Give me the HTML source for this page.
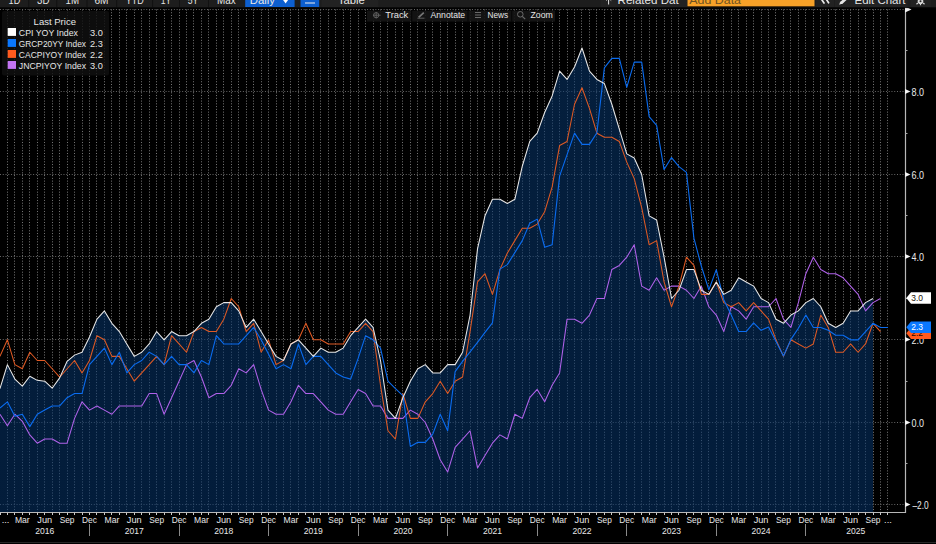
<!DOCTYPE html><html><head><meta charset="utf-8"><style>
html,body{margin:0;padding:0;background:#000;width:936px;height:544px;overflow:hidden;}
body{position:relative;font-family:"Liberation Sans",sans-serif;}
svg{position:absolute;left:0;top:0;}
text{font-family:"Liberation Sans",sans-serif;}
</style></head><body>
<svg width="936" height="544" viewBox="0 0 936 544">
<defs><linearGradient id="fg" x1="0" y1="0" x2="0" y2="1"><stop offset="0" stop-color="#08386f"/><stop offset="1" stop-color="#05346b"/></linearGradient></defs>
<path d="M7.50,9.5 V512.5 M14.50,9.5 V512.5 M22.50,9.5 V512.5 M29.50,9.5 V512.5 M37.50,9.5 V512.5 M44.50,9.5 V512.5 M52.50,9.5 V512.5 M59.50,9.5 V512.5 M67.50,9.5 V512.5 M74.50,9.5 V512.5 M82.50,9.5 V512.5 M89.50,9.5 V512.5 M96.50,9.5 V512.5 M104.50,9.5 V512.5 M111.50,9.5 V512.5 M119.50,9.5 V512.5 M126.50,9.5 V512.5 M134.50,9.5 V512.5 M141.50,9.5 V512.5 M149.50,9.5 V512.5 M156.50,9.5 V512.5 M164.50,9.5 V512.5 M171.50,9.5 V512.5 M179.50,9.5 V512.5 M186.50,9.5 V512.5 M193.50,9.5 V512.5 M201.50,9.5 V512.5 M208.50,9.5 V512.5 M216.50,9.5 V512.5 M223.50,9.5 V512.5 M231.50,9.5 V512.5 M238.50,9.5 V512.5 M246.50,9.5 V512.5 M253.50,9.5 V512.5 M261.50,9.5 V512.5 M268.50,9.5 V512.5 M276.50,9.5 V512.5 M283.50,9.5 V512.5 M290.50,9.5 V512.5 M298.50,9.5 V512.5 M305.50,9.5 V512.5 M313.50,9.5 V512.5 M320.50,9.5 V512.5 M328.50,9.5 V512.5 M335.50,9.5 V512.5 M343.50,9.5 V512.5 M350.50,9.5 V512.5 M358.50,9.5 V512.5 M365.50,9.5 V512.5 M373.50,9.5 V512.5 M380.50,9.5 V512.5 M387.50,9.5 V512.5 M395.50,9.5 V512.5 M402.50,9.5 V512.5 M410.50,9.5 V512.5 M417.50,9.5 V512.5 M425.50,9.5 V512.5 M432.50,9.5 V512.5 M440.50,9.5 V512.5 M447.50,9.5 V512.5 M455.50,9.5 V512.5 M462.50,9.5 V512.5 M470.50,9.5 V512.5 M477.50,9.5 V512.5 M484.50,9.5 V512.5 M492.50,9.5 V512.5 M499.50,9.5 V512.5 M507.50,9.5 V512.5 M514.50,9.5 V512.5 M522.50,9.5 V512.5 M529.50,9.5 V512.5 M537.50,9.5 V512.5 M544.50,9.5 V512.5 M552.50,9.5 V512.5 M559.50,9.5 V512.5 M567.50,9.5 V512.5 M574.50,9.5 V512.5 M581.50,9.5 V512.5 M589.50,9.5 V512.5 M596.50,9.5 V512.5 M604.50,9.5 V512.5 M611.50,9.5 V512.5 M619.50,9.5 V512.5 M626.50,9.5 V512.5 M634.50,9.5 V512.5 M641.50,9.5 V512.5 M649.50,9.5 V512.5 M656.50,9.5 V512.5 M664.50,9.5 V512.5 M671.50,9.5 V512.5 M678.50,9.5 V512.5 M686.50,9.5 V512.5 M693.50,9.5 V512.5 M701.50,9.5 V512.5 M708.50,9.5 V512.5 M716.50,9.5 V512.5 M723.50,9.5 V512.5 M731.50,9.5 V512.5 M738.50,9.5 V512.5 M746.50,9.5 V512.5 M753.50,9.5 V512.5 M761.50,9.5 V512.5 M768.50,9.5 V512.5 M775.50,9.5 V512.5 M783.50,9.5 V512.5 M790.50,9.5 V512.5 M798.50,9.5 V512.5 M805.50,9.5 V512.5 M813.50,9.5 V512.5 M820.50,9.5 V512.5 M828.50,9.5 V512.5 M835.50,9.5 V512.5 M843.50,9.5 V512.5 M850.50,9.5 V512.5 M858.50,9.5 V512.5 M865.50,9.5 V512.5 M873.50,9.5 V512.5 M880.50,9.5 V512.5 M887.50,9.5 V512.5" stroke="#787878" stroke-width="1" stroke-dasharray="1 1.76" fill="none"/>
<path d="M0,9.5 H905.5 M0,91.5 H905.5 M0,174.5 H905.5 M0,256.5 H905.5 M0,339.5 H905.5 M0,422.5 H905.5 M0,504.5 H905.5" stroke="#686868" stroke-width="1" stroke-dasharray="1 1.76" fill="none"/>
<path d="M-0.05,388.61 L7.41,364.63 L14.87,379.10 L22.34,386.13 L29.80,376.21 L37.26,380.34 L44.72,381.17 L52.18,388.19 L59.65,377.86 L67.11,361.33 L74.57,355.13 L82.03,352.23 L89.49,336.94 L96.96,319.17 L104.42,310.90 L111.88,323.30 L119.34,331.57 L126.80,343.97 L134.27,356.37 L141.73,352.23 L149.19,343.97 L156.65,331.57 L164.11,339.83 L171.58,331.57 L179.04,335.70 L186.50,335.70 L193.96,331.57 L201.42,323.30 L208.89,319.17 L216.35,306.77 L223.81,302.63 L231.27,302.63 L238.73,310.90 L246.20,327.43 L253.66,319.17 L261.12,331.57 L268.58,343.97 L276.04,356.37 L283.51,360.50 L290.97,343.97 L298.43,339.83 L305.89,348.10 L313.35,356.37 L320.82,348.10 L328.28,352.23 L335.74,352.23 L343.20,348.10 L350.66,335.70 L358.13,327.43 L365.59,319.17 L373.05,327.43 L380.51,360.50 L387.97,410.10 L395.44,418.37 L402.90,397.70 L410.36,381.17 L417.82,368.77 L425.28,364.63 L432.75,372.90 L440.21,372.90 L447.67,364.63 L455.13,364.63 L462.59,352.23 L470.06,315.03 L477.52,248.90 L484.98,215.84 L492.44,199.30 L499.90,199.30 L507.37,203.44 L514.83,199.30 L522.29,166.24 L529.75,141.44 L537.21,133.17 L544.68,112.50 L552.14,95.97 L559.60,71.17 L567.06,79.44 L574.52,67.04 L581.99,48.02 L589.45,71.17 L596.91,79.44 L604.37,83.57 L611.83,104.24 L619.30,129.04 L626.76,153.84 L634.22,157.97 L641.68,174.50 L649.14,215.84 L656.61,219.97 L664.07,257.17 L671.53,298.50 L678.99,290.23 L686.45,269.57 L693.92,269.57 L701.38,290.23 L708.84,294.37 L716.30,281.97 L723.76,294.37 L731.23,290.23 L738.69,277.83 L746.15,281.97 L753.61,286.10 L761.07,298.50 L768.54,302.63 L776.00,319.17 L783.46,323.30 L790.92,315.03 L798.38,310.90 L805.85,302.63 L813.31,298.50 L820.77,306.77 L828.23,323.30 L835.69,327.43 L843.16,323.30 L850.62,310.90 L858.08,310.90 L865.54,302.63 L873.00,298.50 L873.00,512.50 L-0.05,512.50 Z" fill="url(#fg)" fill-opacity="0.55"/>
<path d="M-0.05,414.23 L7.41,425.81 L14.87,414.23 L22.34,421.26 L29.80,434.90 L37.26,443.17 L44.72,439.03 L52.18,439.03 L59.65,443.17 L67.11,443.17 L74.57,418.37 L82.03,401.83 L89.49,410.10 L96.96,405.97 L104.42,410.10 L111.88,414.23 L119.34,405.97 L126.80,405.97 L134.27,405.97 L141.73,405.97 L149.19,393.57 L156.65,393.57 L164.11,414.23 L171.58,397.70 L179.04,381.17 L186.50,364.63 L193.96,360.50 L201.42,377.03 L208.89,397.70 L216.35,393.57 L223.81,393.57 L231.27,385.30 L238.73,368.77 L246.20,372.90 L253.66,364.63 L261.12,389.43 L268.58,410.10 L276.04,414.23 L283.51,414.23 L290.97,401.83 L298.43,385.30 L305.89,393.57 L313.35,393.57 L320.82,401.83 L328.28,410.10 L335.74,414.23 L343.20,414.23 L350.66,401.83 L358.13,389.43 L365.59,393.57 L373.05,405.97 L380.51,405.97 L387.97,418.37 L395.44,418.37 L402.90,418.37 L410.36,410.10 L417.82,414.23 L425.28,422.50 L432.75,439.03 L440.21,459.70 L447.67,472.10 L455.13,447.30 L462.59,439.03 L470.06,430.77 L477.52,467.97 L484.98,455.57 L492.44,443.17 L499.90,434.90 L507.37,439.03 L514.83,414.23 L522.29,418.37 L529.75,397.70 L537.21,389.43 L544.68,401.83 L552.14,385.30 L559.60,372.90 L567.06,319.17 L574.52,319.17 L581.99,323.30 L589.45,315.03 L596.91,298.50 L604.37,298.50 L611.83,269.57 L619.30,265.43 L626.76,257.17 L634.22,244.77 L641.68,286.10 L649.14,290.23 L656.61,277.83 L664.07,290.23 L671.53,286.10 L678.99,286.10 L686.45,290.23 L693.92,298.50 L701.38,286.10 L708.84,306.77 L716.30,315.03 L723.76,331.57 L731.23,306.77 L738.69,310.90 L746.15,319.17 L753.61,306.77 L761.07,306.77 L768.54,306.77 L776.00,298.50 L783.46,319.17 L790.92,327.43 L798.38,302.63 L805.85,273.70 L813.31,257.17 L820.77,269.57 L828.23,273.70 L835.69,273.70 L843.16,277.83 L850.62,286.10 L858.08,294.37 L865.54,310.90 L873.00,302.63 L880.47,298.50" stroke="#b062ea" stroke-width="1.05" fill="none" stroke-linejoin="round"/>
<path d="M-0.05,356.37 L7.41,339.83 L14.87,364.63 L22.34,368.77 L29.80,352.23 L37.26,360.50 L44.72,360.50 L52.18,368.77 L59.65,377.03 L67.11,368.77 L74.57,360.50 L82.03,372.90 L89.49,360.50 L96.96,335.70 L104.42,339.83 L111.88,356.37 L119.34,356.37 L126.80,368.77 L134.27,381.17 L141.73,372.90 L149.19,364.63 L156.65,356.37 L164.11,364.63 L171.58,335.70 L179.04,343.97 L186.50,352.23 L193.96,331.57 L201.42,327.43 L208.89,331.57 L216.35,331.57 L223.81,319.17 L231.27,298.50 L238.73,306.77 L246.20,331.57 L253.66,323.30 L261.12,352.23 L268.58,339.83 L276.04,364.63 L283.51,360.50 L290.97,343.97 L298.43,339.83 L305.89,323.30 L313.35,339.83 L320.82,339.83 L328.28,343.97 L335.74,343.97 L343.20,343.97 L350.66,331.57 L358.13,331.57 L365.59,323.30 L373.05,331.57 L380.51,385.30 L387.97,430.77 L395.44,439.03 L402.90,393.57 L410.36,418.37 L417.82,418.37 L425.28,401.83 L432.75,393.57 L440.21,381.17 L447.67,393.57 L455.13,381.17 L462.59,377.03 L470.06,331.57 L477.52,281.97 L484.98,273.70 L492.44,294.37 L499.90,269.57 L507.37,253.03 L514.83,240.63 L522.29,228.23 L529.75,228.23 L537.21,224.10 L544.68,211.70 L552.14,186.90 L559.60,145.57 L567.06,141.44 L574.52,104.24 L581.99,87.70 L589.45,108.37 L596.91,133.17 L604.37,137.30 L611.83,137.30 L619.30,141.44 L626.76,162.10 L634.22,178.64 L641.68,207.57 L649.14,244.77 L656.61,240.63 L664.07,281.97 L671.53,306.77 L678.99,286.10 L686.45,257.17 L693.92,265.43 L701.38,294.37 L708.84,294.37 L716.30,281.97 L723.76,302.63 L731.23,306.77 L738.69,302.63 L746.15,310.90 L753.61,302.63 L761.07,310.90 L768.54,319.17 L776.00,339.83 L783.46,356.37 L790.92,339.83 L798.38,343.97 L805.85,348.10 L813.31,343.97 L820.77,315.03 L828.23,327.43 L835.69,352.23 L843.16,352.23 L850.62,343.97 L858.08,352.23 L865.54,343.97 L873.00,323.30 L880.47,331.57" stroke="#e05a24" stroke-width="1.05" fill="none" stroke-linejoin="round"/>
<path d="M-0.05,408.03 L7.41,401.83 L14.87,416.30 L22.34,414.23 L29.80,426.63 L37.26,414.23 L44.72,410.10 L52.18,405.97 L59.65,405.97 L67.11,397.70 L74.57,393.57 L82.03,393.57 L89.49,364.63 L96.96,356.37 L104.42,348.10 L111.88,364.63 L119.34,352.23 L126.80,372.90 L134.27,364.63 L141.73,360.50 L149.19,352.23 L156.65,356.37 L164.11,364.63 L171.58,356.37 L179.04,364.63 L186.50,364.63 L193.96,372.90 L201.42,360.50 L208.89,364.63 L216.35,335.70 L223.81,343.97 L231.27,343.97 L238.73,343.97 L246.20,335.70 L253.66,327.43 L261.12,339.83 L268.58,354.30 L276.04,368.77 L283.51,364.63 L290.97,368.77 L298.43,343.97 L305.89,364.63 L313.35,356.37 L320.82,356.37 L328.28,364.63 L335.74,372.90 L343.20,377.03 L350.66,379.10 L358.13,358.43 L365.59,335.70 L373.05,339.83 L380.51,348.10 L387.97,381.17 L395.44,388.61 L402.90,395.63 L410.36,446.47 L417.82,442.34 L425.28,442.34 L432.75,434.07 L440.21,414.23 L447.67,430.77 L455.13,371.66 L462.59,361.33 L470.06,351.82 L477.52,342.31 L484.98,332.39 L492.44,322.89 L499.90,269.15 L507.37,264.61 L514.83,252.62 L522.29,240.63 L529.75,223.27 L537.21,219.14 L544.68,247.25 L552.14,244.77 L559.60,176.16 L567.06,154.66 L574.52,133.17 L581.99,144.33 L589.45,144.33 L596.91,132.76 L604.37,67.86 L611.83,58.36 L619.30,58.36 L626.76,87.29 L634.22,62.08 L641.68,62.08 L649.14,116.64 L656.61,125.32 L664.07,169.54 L671.53,157.56 L678.99,166.65 L686.45,172.44 L693.92,238.15 L701.38,266.26 L708.84,289.82 L716.30,269.57 L723.76,299.74 L731.23,315.03 L738.69,331.57 L746.15,331.57 L753.61,322.89 L761.07,330.33 L768.54,327.02 L776.00,341.49 L783.46,355.95 L790.92,339.42 L798.38,328.26 L805.85,315.03 L813.31,327.43 L820.77,327.43 L828.23,330.33 L835.69,335.29 L843.16,335.29 L850.62,339.83 L858.08,339.83 L865.54,331.57 L873.00,323.30 L880.47,327.43 L887.93,327.43" stroke="#0a6cf0" stroke-width="1.1" fill="none" stroke-linejoin="round"/>
<path d="M-0.05,388.61 L7.41,364.63 L14.87,379.10 L22.34,386.13 L29.80,376.21 L37.26,380.34 L44.72,381.17 L52.18,388.19 L59.65,377.86 L67.11,361.33 L74.57,355.13 L82.03,352.23 L89.49,336.94 L96.96,319.17 L104.42,310.90 L111.88,323.30 L119.34,331.57 L126.80,343.97 L134.27,356.37 L141.73,352.23 L149.19,343.97 L156.65,331.57 L164.11,339.83 L171.58,331.57 L179.04,335.70 L186.50,335.70 L193.96,331.57 L201.42,323.30 L208.89,319.17 L216.35,306.77 L223.81,302.63 L231.27,302.63 L238.73,310.90 L246.20,327.43 L253.66,319.17 L261.12,331.57 L268.58,343.97 L276.04,356.37 L283.51,360.50 L290.97,343.97 L298.43,339.83 L305.89,348.10 L313.35,356.37 L320.82,348.10 L328.28,352.23 L335.74,352.23 L343.20,348.10 L350.66,335.70 L358.13,327.43 L365.59,319.17 L373.05,327.43 L380.51,360.50 L387.97,410.10 L395.44,418.37 L402.90,397.70 L410.36,381.17 L417.82,368.77 L425.28,364.63 L432.75,372.90 L440.21,372.90 L447.67,364.63 L455.13,364.63 L462.59,352.23 L470.06,315.03 L477.52,248.90 L484.98,215.84 L492.44,199.30 L499.90,199.30 L507.37,203.44 L514.83,199.30 L522.29,166.24 L529.75,141.44 L537.21,133.17 L544.68,112.50 L552.14,95.97 L559.60,71.17 L567.06,79.44 L574.52,67.04 L581.99,48.02 L589.45,71.17 L596.91,79.44 L604.37,83.57 L611.83,104.24 L619.30,129.04 L626.76,153.84 L634.22,157.97 L641.68,174.50 L649.14,215.84 L656.61,219.97 L664.07,257.17 L671.53,298.50 L678.99,290.23 L686.45,269.57 L693.92,269.57 L701.38,290.23 L708.84,294.37 L716.30,281.97 L723.76,294.37 L731.23,290.23 L738.69,277.83 L746.15,281.97 L753.61,286.10 L761.07,298.50 L768.54,302.63 L776.00,319.17 L783.46,323.30 L790.92,315.03 L798.38,310.90 L805.85,302.63 L813.31,298.50 L820.77,306.77 L828.23,323.30 L835.69,327.43 L843.16,323.30 L850.62,310.90 L858.08,310.90 L865.54,302.63 L873.00,298.50" stroke="#e8e8e8" stroke-width="1.05" fill="none" stroke-linejoin="round"/>
<path d="M0,512.5 H905.5 V9.5" stroke="#b8b8b8" stroke-width="1.2" fill="none"/>
<path d="M0.5,512.5 V515.0 M7.50,512.5 V515.0 M14.50,512.5 V515.0 M22.50,512.5 V515.0 M29.50,512.5 V515.0 M37.50,512.5 V515.0 M44.50,512.5 V515.0 M52.50,512.5 V515.0 M59.50,512.5 V515.0 M67.50,512.5 V515.0 M74.50,512.5 V515.0 M82.50,512.5 V515.0 M89.50,512.5 V515.0 M96.50,512.5 V515.0 M104.50,512.5 V515.0 M111.50,512.5 V515.0 M119.50,512.5 V515.0 M126.50,512.5 V515.0 M134.50,512.5 V515.0 M141.50,512.5 V515.0 M149.50,512.5 V515.0 M156.50,512.5 V515.0 M164.50,512.5 V515.0 M171.50,512.5 V515.0 M179.50,512.5 V515.0 M186.50,512.5 V515.0 M193.50,512.5 V515.0 M201.50,512.5 V515.0 M208.50,512.5 V515.0 M216.50,512.5 V515.0 M223.50,512.5 V515.0 M231.50,512.5 V515.0 M238.50,512.5 V515.0 M246.50,512.5 V515.0 M253.50,512.5 V515.0 M261.50,512.5 V515.0 M268.50,512.5 V515.0 M276.50,512.5 V515.0 M283.50,512.5 V515.0 M290.50,512.5 V515.0 M298.50,512.5 V515.0 M305.50,512.5 V515.0 M313.50,512.5 V515.0 M320.50,512.5 V515.0 M328.50,512.5 V515.0 M335.50,512.5 V515.0 M343.50,512.5 V515.0 M350.50,512.5 V515.0 M358.50,512.5 V515.0 M365.50,512.5 V515.0 M373.50,512.5 V515.0 M380.50,512.5 V515.0 M387.50,512.5 V515.0 M395.50,512.5 V515.0 M402.50,512.5 V515.0 M410.50,512.5 V515.0 M417.50,512.5 V515.0 M425.50,512.5 V515.0 M432.50,512.5 V515.0 M440.50,512.5 V515.0 M447.50,512.5 V515.0 M455.50,512.5 V515.0 M462.50,512.5 V515.0 M470.50,512.5 V515.0 M477.50,512.5 V515.0 M484.50,512.5 V515.0 M492.50,512.5 V515.0 M499.50,512.5 V515.0 M507.50,512.5 V515.0 M514.50,512.5 V515.0 M522.50,512.5 V515.0 M529.50,512.5 V515.0 M537.50,512.5 V515.0 M544.50,512.5 V515.0 M552.50,512.5 V515.0 M559.50,512.5 V515.0 M567.50,512.5 V515.0 M574.50,512.5 V515.0 M581.50,512.5 V515.0 M589.50,512.5 V515.0 M596.50,512.5 V515.0 M604.50,512.5 V515.0 M611.50,512.5 V515.0 M619.50,512.5 V515.0 M626.50,512.5 V515.0 M634.50,512.5 V515.0 M641.50,512.5 V515.0 M649.50,512.5 V515.0 M656.50,512.5 V515.0 M664.50,512.5 V515.0 M671.50,512.5 V515.0 M678.50,512.5 V515.0 M686.50,512.5 V515.0 M693.50,512.5 V515.0 M701.50,512.5 V515.0 M708.50,512.5 V515.0 M716.50,512.5 V515.0 M723.50,512.5 V515.0 M731.50,512.5 V515.0 M738.50,512.5 V515.0 M746.50,512.5 V515.0 M753.50,512.5 V515.0 M761.50,512.5 V515.0 M768.50,512.5 V515.0 M775.50,512.5 V515.0 M783.50,512.5 V515.0 M790.50,512.5 V515.0 M798.50,512.5 V515.0 M805.50,512.5 V515.0 M813.50,512.5 V515.0 M820.50,512.5 V515.0 M828.50,512.5 V515.0 M835.50,512.5 V515.0 M843.50,512.5 V515.0 M850.50,512.5 V515.0 M858.50,512.5 V515.0 M865.50,512.5 V515.0 M873.50,512.5 V515.0 M880.50,512.5 V515.0 M887.50,512.5 V515.0" stroke="#c8c8c8" stroke-width="1" fill="none"/>
<path d="M905.0,88.9 L910.5,91.5 L905.0,94.1 Z" fill="#f4f4f4"/>
<text x="911.6" y="95.7" font-size="10" fill="#eaeaea" textLength="12.5" lengthAdjust="spacingAndGlyphs">8.0</text>
<path d="M905.0,171.9 L910.5,174.5 L905.0,177.1 Z" fill="#f4f4f4"/>
<text x="911.6" y="178.7" font-size="10" fill="#eaeaea" textLength="12.5" lengthAdjust="spacingAndGlyphs">6.0</text>
<path d="M905.0,253.9 L910.5,256.5 L905.0,259.1 Z" fill="#f4f4f4"/>
<text x="911.6" y="260.7" font-size="10" fill="#eaeaea" textLength="12.5" lengthAdjust="spacingAndGlyphs">4.0</text>
<path d="M905.0,336.9 L910.5,339.5 L905.0,342.1 Z" fill="#f4f4f4"/>
<text x="911.6" y="343.7" font-size="10" fill="#eaeaea" textLength="12.5" lengthAdjust="spacingAndGlyphs">2.0</text>
<path d="M905.0,419.9 L910.5,422.5 L905.0,425.1 Z" fill="#f4f4f4"/>
<text x="911.6" y="426.7" font-size="10" fill="#eaeaea" textLength="12.5" lengthAdjust="spacingAndGlyphs">0.0</text>
<path d="M905.0,501.9 L910.5,504.5 L905.0,507.1 Z" fill="#f4f4f4"/>
<text x="912.4" y="508.7" font-size="10" fill="#eaeaea" textLength="16.3" lengthAdjust="spacingAndGlyphs">–2.0</text>
<path d="M905.5,50.5 H907.5" stroke="#aaa" stroke-width="1"/>
<path d="M905.5,133.5 H907.5" stroke="#aaa" stroke-width="1"/>
<path d="M905.5,215.5 H907.5" stroke="#aaa" stroke-width="1"/>
<path d="M905.5,298.5 H907.5" stroke="#aaa" stroke-width="1"/>
<path d="M905.5,381.5 H907.5" stroke="#aaa" stroke-width="1"/>
<path d="M905.5,463.5 H907.5" stroke="#aaa" stroke-width="1"/>
<path d="M905.0,6.5 L911.5,9.5 L905.0,12.5 Z" fill="#f0f0f0"/>
<text x="22.34" y="522.9" font-size="9.3" fill="#e8e8e8" text-anchor="middle" textLength="14.8" lengthAdjust="spacingAndGlyphs">Mar</text>
<text x="44.72" y="522.9" font-size="9.3" fill="#e8e8e8" text-anchor="middle" textLength="14.8" lengthAdjust="spacingAndGlyphs">Jun</text>
<text x="67.11" y="522.9" font-size="9.3" fill="#e8e8e8" text-anchor="middle" textLength="14.8" lengthAdjust="spacingAndGlyphs">Sep</text>
<text x="89.49" y="522.9" font-size="9.3" fill="#e8e8e8" text-anchor="middle" textLength="14.8" lengthAdjust="spacingAndGlyphs">Dec</text>
<text x="111.88" y="522.9" font-size="9.3" fill="#e8e8e8" text-anchor="middle" textLength="14.8" lengthAdjust="spacingAndGlyphs">Mar</text>
<text x="134.27" y="522.9" font-size="9.3" fill="#e8e8e8" text-anchor="middle" textLength="14.8" lengthAdjust="spacingAndGlyphs">Jun</text>
<text x="156.65" y="522.9" font-size="9.3" fill="#e8e8e8" text-anchor="middle" textLength="14.8" lengthAdjust="spacingAndGlyphs">Sep</text>
<text x="179.04" y="522.9" font-size="9.3" fill="#e8e8e8" text-anchor="middle" textLength="14.8" lengthAdjust="spacingAndGlyphs">Dec</text>
<text x="201.42" y="522.9" font-size="9.3" fill="#e8e8e8" text-anchor="middle" textLength="14.8" lengthAdjust="spacingAndGlyphs">Mar</text>
<text x="223.81" y="522.9" font-size="9.3" fill="#e8e8e8" text-anchor="middle" textLength="14.8" lengthAdjust="spacingAndGlyphs">Jun</text>
<text x="246.20" y="522.9" font-size="9.3" fill="#e8e8e8" text-anchor="middle" textLength="14.8" lengthAdjust="spacingAndGlyphs">Sep</text>
<text x="268.58" y="522.9" font-size="9.3" fill="#e8e8e8" text-anchor="middle" textLength="14.8" lengthAdjust="spacingAndGlyphs">Dec</text>
<text x="290.97" y="522.9" font-size="9.3" fill="#e8e8e8" text-anchor="middle" textLength="14.8" lengthAdjust="spacingAndGlyphs">Mar</text>
<text x="313.35" y="522.9" font-size="9.3" fill="#e8e8e8" text-anchor="middle" textLength="14.8" lengthAdjust="spacingAndGlyphs">Jun</text>
<text x="335.74" y="522.9" font-size="9.3" fill="#e8e8e8" text-anchor="middle" textLength="14.8" lengthAdjust="spacingAndGlyphs">Sep</text>
<text x="358.13" y="522.9" font-size="9.3" fill="#e8e8e8" text-anchor="middle" textLength="14.8" lengthAdjust="spacingAndGlyphs">Dec</text>
<text x="380.51" y="522.9" font-size="9.3" fill="#e8e8e8" text-anchor="middle" textLength="14.8" lengthAdjust="spacingAndGlyphs">Mar</text>
<text x="402.90" y="522.9" font-size="9.3" fill="#e8e8e8" text-anchor="middle" textLength="14.8" lengthAdjust="spacingAndGlyphs">Jun</text>
<text x="425.28" y="522.9" font-size="9.3" fill="#e8e8e8" text-anchor="middle" textLength="14.8" lengthAdjust="spacingAndGlyphs">Sep</text>
<text x="447.67" y="522.9" font-size="9.3" fill="#e8e8e8" text-anchor="middle" textLength="14.8" lengthAdjust="spacingAndGlyphs">Dec</text>
<text x="470.06" y="522.9" font-size="9.3" fill="#e8e8e8" text-anchor="middle" textLength="14.8" lengthAdjust="spacingAndGlyphs">Mar</text>
<text x="492.44" y="522.9" font-size="9.3" fill="#e8e8e8" text-anchor="middle" textLength="14.8" lengthAdjust="spacingAndGlyphs">Jun</text>
<text x="514.83" y="522.9" font-size="9.3" fill="#e8e8e8" text-anchor="middle" textLength="14.8" lengthAdjust="spacingAndGlyphs">Sep</text>
<text x="537.21" y="522.9" font-size="9.3" fill="#e8e8e8" text-anchor="middle" textLength="14.8" lengthAdjust="spacingAndGlyphs">Dec</text>
<text x="559.60" y="522.9" font-size="9.3" fill="#e8e8e8" text-anchor="middle" textLength="14.8" lengthAdjust="spacingAndGlyphs">Mar</text>
<text x="581.99" y="522.9" font-size="9.3" fill="#e8e8e8" text-anchor="middle" textLength="14.8" lengthAdjust="spacingAndGlyphs">Jun</text>
<text x="604.37" y="522.9" font-size="9.3" fill="#e8e8e8" text-anchor="middle" textLength="14.8" lengthAdjust="spacingAndGlyphs">Sep</text>
<text x="626.76" y="522.9" font-size="9.3" fill="#e8e8e8" text-anchor="middle" textLength="14.8" lengthAdjust="spacingAndGlyphs">Dec</text>
<text x="649.14" y="522.9" font-size="9.3" fill="#e8e8e8" text-anchor="middle" textLength="14.8" lengthAdjust="spacingAndGlyphs">Mar</text>
<text x="671.53" y="522.9" font-size="9.3" fill="#e8e8e8" text-anchor="middle" textLength="14.8" lengthAdjust="spacingAndGlyphs">Jun</text>
<text x="693.92" y="522.9" font-size="9.3" fill="#e8e8e8" text-anchor="middle" textLength="14.8" lengthAdjust="spacingAndGlyphs">Sep</text>
<text x="716.30" y="522.9" font-size="9.3" fill="#e8e8e8" text-anchor="middle" textLength="14.8" lengthAdjust="spacingAndGlyphs">Dec</text>
<text x="738.69" y="522.9" font-size="9.3" fill="#e8e8e8" text-anchor="middle" textLength="14.8" lengthAdjust="spacingAndGlyphs">Mar</text>
<text x="761.07" y="522.9" font-size="9.3" fill="#e8e8e8" text-anchor="middle" textLength="14.8" lengthAdjust="spacingAndGlyphs">Jun</text>
<text x="783.46" y="522.9" font-size="9.3" fill="#e8e8e8" text-anchor="middle" textLength="14.8" lengthAdjust="spacingAndGlyphs">Sep</text>
<text x="805.85" y="522.9" font-size="9.3" fill="#e8e8e8" text-anchor="middle" textLength="14.8" lengthAdjust="spacingAndGlyphs">Dec</text>
<text x="828.23" y="522.9" font-size="9.3" fill="#e8e8e8" text-anchor="middle" textLength="14.8" lengthAdjust="spacingAndGlyphs">Mar</text>
<text x="850.62" y="522.9" font-size="9.3" fill="#e8e8e8" text-anchor="middle" textLength="14.8" lengthAdjust="spacingAndGlyphs">Jun</text>
<text x="873.00" y="522.9" font-size="9.3" fill="#e8e8e8" text-anchor="middle" textLength="14.8" lengthAdjust="spacingAndGlyphs">Sep</text>
<text x="5.5" y="522.9" font-size="9.3" fill="#e8e8e8" text-anchor="middle">...</text>
<text x="887.93" y="522.9" font-size="9.3" fill="#e8e8e8" text-anchor="middle">...</text>
<text x="44.72" y="533.8" font-size="9.6" fill="#e8e8e8" text-anchor="middle" textLength="19" lengthAdjust="spacingAndGlyphs">2016</text>
<text x="134.27" y="533.8" font-size="9.6" fill="#e8e8e8" text-anchor="middle" textLength="19" lengthAdjust="spacingAndGlyphs">2017</text>
<text x="223.81" y="533.8" font-size="9.6" fill="#e8e8e8" text-anchor="middle" textLength="19" lengthAdjust="spacingAndGlyphs">2018</text>
<text x="313.35" y="533.8" font-size="9.6" fill="#e8e8e8" text-anchor="middle" textLength="19" lengthAdjust="spacingAndGlyphs">2019</text>
<text x="402.90" y="533.8" font-size="9.6" fill="#e8e8e8" text-anchor="middle" textLength="19" lengthAdjust="spacingAndGlyphs">2020</text>
<text x="492.44" y="533.8" font-size="9.6" fill="#e8e8e8" text-anchor="middle" textLength="19" lengthAdjust="spacingAndGlyphs">2021</text>
<text x="581.99" y="533.8" font-size="9.6" fill="#e8e8e8" text-anchor="middle" textLength="19" lengthAdjust="spacingAndGlyphs">2022</text>
<text x="671.53" y="533.8" font-size="9.6" fill="#e8e8e8" text-anchor="middle" textLength="19" lengthAdjust="spacingAndGlyphs">2023</text>
<text x="761.07" y="533.8" font-size="9.6" fill="#e8e8e8" text-anchor="middle" textLength="19" lengthAdjust="spacingAndGlyphs">2024</text>
<text x="855.67" y="533.8" font-size="9.6" fill="#e8e8e8" text-anchor="middle" textLength="19" lengthAdjust="spacingAndGlyphs">2025</text>
<path d="M89.50,524 V536" stroke="#8a8a8a" stroke-width="1"/>
<path d="M179.50,524 V536" stroke="#8a8a8a" stroke-width="1"/>
<path d="M268.50,524 V536" stroke="#8a8a8a" stroke-width="1"/>
<path d="M358.50,524 V536" stroke="#8a8a8a" stroke-width="1"/>
<path d="M447.50,524 V536" stroke="#8a8a8a" stroke-width="1"/>
<path d="M537.50,524 V536" stroke="#8a8a8a" stroke-width="1"/>
<path d="M626.50,524 V536" stroke="#8a8a8a" stroke-width="1"/>
<path d="M716.50,524 V536" stroke="#8a8a8a" stroke-width="1"/>
<path d="M805.50,524 V536" stroke="#8a8a8a" stroke-width="1"/>
<path d="M0,542.5 H936" stroke="#262626" stroke-width="1"/>
<rect x="2" y="11" width="107" height="64.5" rx="2" fill="#101010" fill-opacity="0.82"/>
<text x="33.6" y="24.7" font-size="9.3" fill="#e6e6e6" textLength="42.4" lengthAdjust="spacingAndGlyphs">Last Price</text>
<rect x="7.7" y="28.0" width="8.3" height="7.9" fill="#ffffff"/>
<text x="18.8" y="35.7" font-size="9.2" fill="#e6e6e6" textLength="59.2" lengthAdjust="spacingAndGlyphs">CPI YOY Index</text>
<text x="90" y="35.7" font-size="9.3" fill="#e6e6e6" textLength="12.8" lengthAdjust="spacingAndGlyphs">3.0</text>
<rect x="7.7" y="39.0" width="8.3" height="7.9" fill="#0a78ff"/>
<text x="18.8" y="46.7" font-size="9.2" fill="#e6e6e6" textLength="67.2" lengthAdjust="spacingAndGlyphs">GRCP20YY Index</text>
<text x="90" y="46.7" font-size="9.3" fill="#e6e6e6" textLength="12.8" lengthAdjust="spacingAndGlyphs">2.3</text>
<rect x="7.7" y="50.0" width="8.3" height="7.9" fill="#ff5a1e"/>
<text x="18.8" y="57.7" font-size="9.2" fill="#e6e6e6" textLength="67.2" lengthAdjust="spacingAndGlyphs">CACPIYOY Index</text>
<text x="90" y="57.7" font-size="9.3" fill="#e6e6e6" textLength="12.8" lengthAdjust="spacingAndGlyphs">2.2</text>
<rect x="7.7" y="61.0" width="8.3" height="7.9" fill="#c274f2"/>
<text x="18.8" y="68.7" font-size="9.2" fill="#e6e6e6" textLength="67.2" lengthAdjust="spacingAndGlyphs">JNCPIYOY Index</text>
<text x="90" y="68.7" font-size="9.3" fill="#e6e6e6" textLength="12.8" lengthAdjust="spacingAndGlyphs">3.0</text>
<rect x="367" y="10.6" width="188" height="11" fill="#151515" fill-opacity="0.92"/>
<path d="M411.7,10 V21.5" stroke="#050505" stroke-width="1"/>
<path d="M468,10 V21.5" stroke="#050505" stroke-width="1"/>
<path d="M511.7,10 V21.5" stroke="#050505" stroke-width="1"/>
<text x="385.3" y="18" font-size="9.3" fill="#e6e6e6" textLength="23" lengthAdjust="spacingAndGlyphs">Track</text>
<text x="430.5" y="18" font-size="9.3" fill="#e6e6e6" textLength="34.7" lengthAdjust="spacingAndGlyphs">Annotate</text>
<text x="487.6" y="18" font-size="9.3" fill="#e6e6e6" textLength="20.6" lengthAdjust="spacingAndGlyphs">News</text>
<text x="530.5" y="18" font-size="9.3" fill="#e6e6e6" textLength="22.3" lengthAdjust="spacingAndGlyphs">Zoom</text>
<circle cx="376.2" cy="15.2" r="2.6" stroke="#666" stroke-width="0.9" fill="none"/><path d="M376.2,12 V18.4 M373,15.2 H380.5" stroke="#666" stroke-width="0.9" fill="none"/>
<path d="M418.6,17.4 L423.8,12.6" stroke="#777" stroke-width="1.7" fill="none"/><path d="M417.5,18.2 H424.5" stroke="#666" stroke-width="0.9" fill="none"/>
<path d="M475,12.5 H481 M475,15 H481 M475,17.5 H481" stroke="#6a6a6a" stroke-width="1.2" fill="none"/>
<circle cx="520.3" cy="14.3" r="2.8" stroke="#6a6a6a" stroke-width="1" fill="none"/><path d="M522.3,16.3 L525.2,19.2" stroke="#6a6a6a" stroke-width="1.2"/>
<rect x="0" y="0" width="936" height="7.1" fill="#1d1d1d"/>
<rect x="0" y="7.1" width="936" height="1" fill="#0c0c0c"/>
<path d="M28.8,0 V7" stroke="#111" stroke-width="1"/>
<path d="M56.8,0 V7" stroke="#111" stroke-width="1"/>
<path d="M87,0 V7" stroke="#111" stroke-width="1"/>
<path d="M116.7,0 V7" stroke="#111" stroke-width="1"/>
<path d="M152.6,0 V7" stroke="#111" stroke-width="1"/>
<path d="M179.5,0 V7" stroke="#111" stroke-width="1"/>
<path d="M208.5,0 V7" stroke="#111" stroke-width="1"/>
<text x="8.6" y="3.7" font-size="11" fill="#e6e6e6" textLength="11.6" lengthAdjust="spacingAndGlyphs">1D</text>
<text x="37" y="3.7" font-size="11" fill="#e6e6e6" textLength="12.4" lengthAdjust="spacingAndGlyphs">3D</text>
<text x="65.5" y="3.7" font-size="11" fill="#e6e6e6" textLength="13.5" lengthAdjust="spacingAndGlyphs">1M</text>
<text x="94.5" y="3.7" font-size="11" fill="#e6e6e6" textLength="14" lengthAdjust="spacingAndGlyphs">6M</text>
<text x="125.7" y="3.7" font-size="11" fill="#e6e6e6" textLength="17.9" lengthAdjust="spacingAndGlyphs">YTD</text>
<text x="160.8" y="3.7" font-size="11" fill="#e6e6e6" textLength="10.5" lengthAdjust="spacingAndGlyphs">1Y</text>
<text x="187.7" y="3.7" font-size="11" fill="#e6e6e6" textLength="10.5" lengthAdjust="spacingAndGlyphs">5Y</text>
<text x="216.9" y="3.7" font-size="11" fill="#e6e6e6" textLength="18.7" lengthAdjust="spacingAndGlyphs">Max</text>
<rect x="245.2" y="0" width="49.4" height="7" fill="#0d5fd0"/>
<text x="249.7" y="3.8" font-size="11" fill="#e6e6e6" textLength="25.3" lengthAdjust="spacingAndGlyphs">Daily</text>
<path d="M282.8,-0.5 L288.4,-0.5 L285.6,3.6 Z" fill="#ffffff"/>
<rect x="300.5" y="0" width="18.7" height="7" fill="#0d5fd0"/>
<path d="M305,3 H315" stroke="#f0f0f0" stroke-width="1"/>
<rect x="321.5" y="0" width="56.8" height="7" fill="#222"/>
<text x="338" y="3.8" font-size="11" fill="#e6e6e6" textLength="26.8" lengthAdjust="spacingAndGlyphs">Table</text>
<rect x="600.4" y="0" width="86.6" height="7" fill="#222"/>
<path d="M608.6,4.5 V-2 M606,0.5 L608.6,-2 L611.2,0.5" stroke="#e8e8e8" stroke-width="1" fill="none"/>
<text x="617.5" y="3.8" font-size="11" fill="#e6e6e6" textLength="61.3" lengthAdjust="spacingAndGlyphs">Related Dat</text>
<rect x="687.5" y="0" width="127" height="6" fill="#f7a128"/>
<rect x="687.5" y="6" width="127" height="1" fill="#5a3a10"/>
<text x="689.3" y="3.8" font-size="11.5" fill="#6e5222" textLength="51.7" lengthAdjust="spacingAndGlyphs">Add Data</text>
<rect x="816" y="0" width="18" height="7" fill="#222"/>
<path d="M821,-1.5 L824,3 M825.8,-1.5 L828.6,2.8" stroke="#e8e8e8" stroke-width="1.7" stroke-linecap="round" fill="none"/>
<rect x="835" y="0" width="72.6" height="7" fill="#222"/>
<path d="M839.2,4.8 L840.2,1.6 L842.6,3.6 Z" fill="#dcdcdc"/><path d="M841.6,2.6 L845.6,-1" stroke="#e4e4e4" stroke-width="2.8" stroke-linecap="round" fill="none"/>
<text x="854.5" y="3.8" font-size="11" fill="#e6e6e6" textLength="51" lengthAdjust="spacingAndGlyphs">Edit Chart</text>
<rect x="910.5" y="0" width="20.3" height="7" fill="#222"/>
<circle cx="920.5" cy="1.2" r="2.8" fill="#d8d8d8"/><circle cx="920.5" cy="1.2" r="1" fill="#222"/>
<path d="M916.5,4.2 L917.8,3 M924.5,4.2 L923.2,3 M920.5,5.2 V4" stroke="#d8d8d8" stroke-width="1.2"/>
<path d="M906.3,333.25 L911,327.5 H931 V339.0 H911 Z" fill="#ff5a1e"/>
<text x="911.2" y="336.4" font-size="9" fill="#2a0a00" textLength="11.8" lengthAdjust="spacingAndGlyphs">2.2</text>
<path d="M906.3,327.2 L911,321.4 H931 V333.0 H911 Z" fill="#0a78ff"/>
<text x="911.2" y="330.4" font-size="9" fill="#ffffff" textLength="11.8" lengthAdjust="spacingAndGlyphs">2.3</text>
<path d="M906.3,297.95 L911,292.2 H931 V303.7 H911 Z" fill="#ffffff"/>
<text x="911.2" y="301.1" font-size="9" fill="#1a1000" textLength="11.8" lengthAdjust="spacingAndGlyphs">3.0</text>
</svg>
</body></html>
